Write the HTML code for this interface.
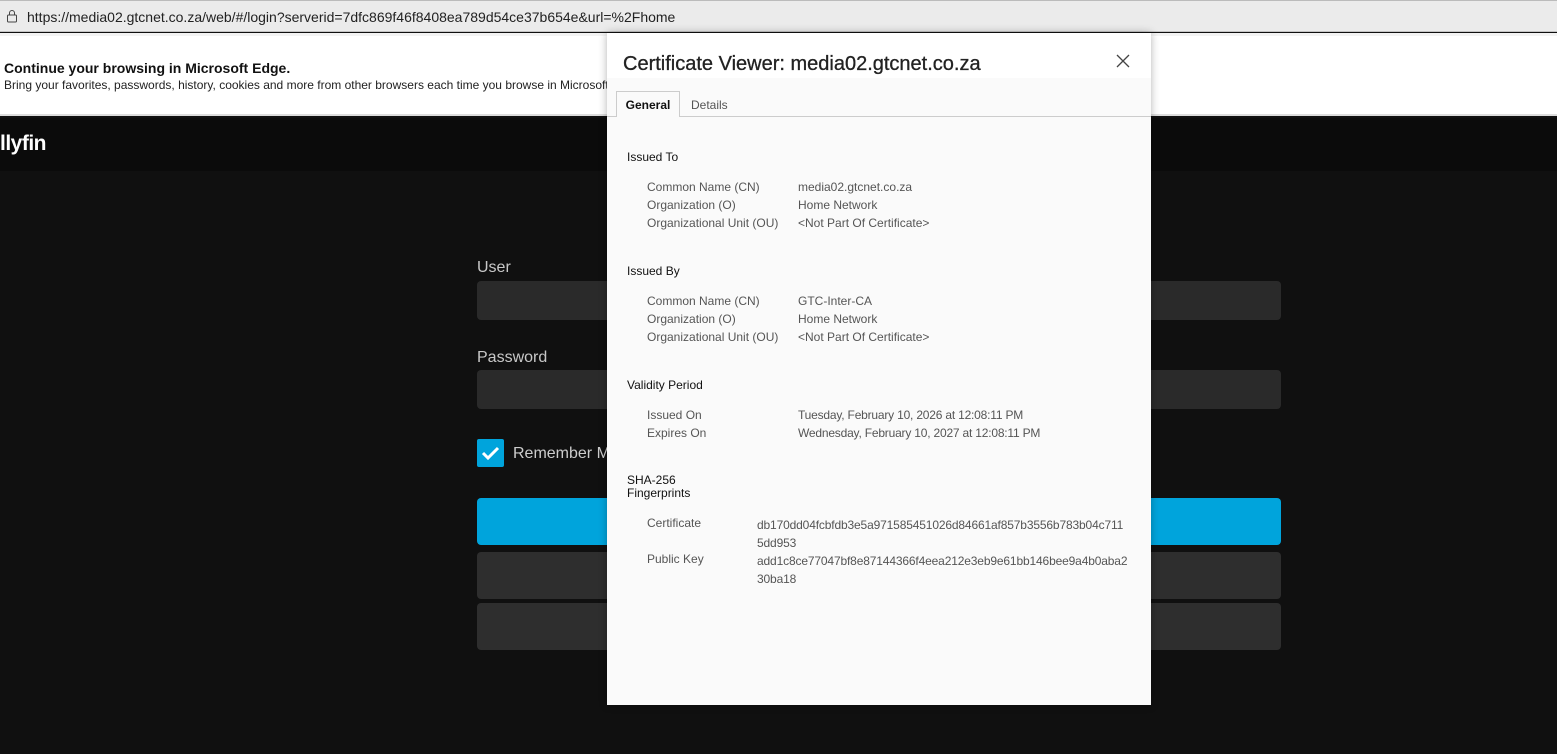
<!DOCTYPE html>
<html><head><style>
*{margin:0;padding:0;box-sizing:border-box}
body{width:1557px;height:754px;overflow:hidden;background:#101010;font-family:"Liberation Sans",sans-serif;position:relative}
.abs{position:absolute}
.addr{left:0;top:0;width:1557px;height:32px;background:#ebebeb;border-bottom:1px solid #c4c4c4;border-top:1px solid #bbb}
.addr span{position:absolute;left:27px;top:8px;font-size:14px;color:#222}
.banner{left:0;top:33px;width:1557px;height:83px;background:#fff;border-top:3px solid #f3f3f3;border-bottom:2px solid #ddd}
.hdr{left:0;top:118px;width:1557px;height:53px;background:#0b0b0b}
.lbl{color:#c8c8c8;font-size:16px}
.inp{left:477px;width:804px;height:39px;background:#2a2a2a;border-radius:4px}
.dlg{left:607px;top:33px;width:544px;height:672px;background:#fafafa;box-shadow:0 0 8px rgba(0,0,0,.3)}
.k{position:absolute;left:40px;font-size:12px;color:#555}
.v{position:absolute;left:191px;font-size:12px;color:#555}
.h{position:absolute;left:20px;font-size:12px;color:#111}
</style></head><body>
<div class="abs addr"><svg class="abs" style="left:6px;top:8px" width="12" height="14" viewBox="0 0 12 14"><rect x="1.5" y="6" width="9" height="7" rx="1" fill="none" stroke="#444"/><path d="M3.5 6V4a2.5 2.5 0 0 1 5 0v2" fill="none" stroke="#444"/></svg><span>https://media02.gtcnet.co.za/web/#/login?serverid=7dfc869f46f8408ea789d54ce37b654e&amp;url=%2Fhome</span></div>
<div class="abs banner">
<div class="abs" style="left:4px;top:24px;font-size:14px;font-weight:bold;color:#111">Continue your browsing in Microsoft Edge.</div>
<div class="abs" style="left:4px;top:42px;font-size:12px;color:#222;white-space:nowrap">Bring your favorites, passwords, history, cookies and more from other browsers each time you browse in Microsoft</div>
</div>
<div class="abs hdr"><div class="abs" style="left:0;top:14px;font-size:21px;color:#fff;font-weight:bold;letter-spacing:-0.5px">llyfin</div></div>
<div class="abs lbl" style="left:477px;top:259px">User</div>
<div class="abs inp" style="top:281px"></div>
<div class="abs lbl" style="left:477px;top:349px">Password</div>
<div class="abs inp" style="top:370px"></div>
<div class="abs" style="left:477px;top:439px;width:27px;height:28px;background:#00a4dc;border-radius:2px"><svg width="27" height="28"><path d="M6 14l5 5 10-10" fill="none" stroke="#fff" stroke-width="3"/></svg></div>
<div class="abs" style="left:513px;top:445px;font-size:16px;color:#ccc">Remember M</div>
<div class="abs" style="left:477px;top:498px;width:804px;height:47px;background:#00a4dc;border-radius:4px"></div>
<div class="abs" style="left:477px;top:552px;width:804px;height:47px;background:#2e2e2e;border-radius:4px"></div>
<div class="abs" style="left:477px;top:603px;width:804px;height:47px;background:#2e2e2e;border-radius:4px"></div>
<div class="abs dlg">
<div class="abs" style="left:0;top:0;width:544px;height:45px;background:#fff"></div>
<div class="abs" style="left:16px;top:20px;font-size:20px;color:#222;-webkit-text-stroke:0.3px #222">Certificate Viewer: media02.gtcnet.co.za</div>
<svg class="abs" style="left:509px;top:21px" width="14" height="14"><path d="M1 1L13 13M13 1L1 13" stroke="#444" stroke-width="1.3"/></svg>
<div class="abs" style="left:0;top:83px;width:544px;height:1px;background:#ccc"></div>
<div class="abs" style="left:9px;top:58px;width:64px;height:26px;border:1px solid #ccc;border-bottom:none;background:#fafafa;font-size:12px;font-weight:bold;color:#111;text-align:center;line-height:26px">General</div>
<div class="abs" style="left:84px;top:65px;font-size:12px;color:#555">Details</div>
<div class="h" style="top:117px">Issued To</div>
<div class="k" style="top:147px">Common Name (CN)</div><div class="v" style="top:147px">media02.gtcnet.co.za</div>
<div class="k" style="top:165px">Organization (O)</div><div class="v" style="top:165px">Home Network</div>
<div class="k" style="top:183px">Organizational Unit (OU)</div><div class="v" style="top:183px">&lt;Not Part Of Certificate&gt;</div>
<div class="h" style="top:231px">Issued By</div>
<div class="k" style="top:261px">Common Name (CN)</div><div class="v" style="top:261px">GTC-Inter-CA</div>
<div class="k" style="top:279px">Organization (O)</div><div class="v" style="top:279px">Home Network</div>
<div class="k" style="top:297px">Organizational Unit (OU)</div><div class="v" style="top:297px">&lt;Not Part Of Certificate&gt;</div>
<div class="h" style="top:345px">Validity Period</div>
<div class="k" style="top:375px">Issued On</div><div class="v" style="top:375px;letter-spacing:-0.2px">Tuesday, February 10, 2026 at 12:08:11 PM</div>
<div class="k" style="top:393px">Expires On</div><div class="v" style="top:393px;letter-spacing:-0.2px">Wednesday, February 10, 2027 at 12:08:11 PM</div>
<div class="h" style="top:441px;line-height:13px">SHA-256<br>Fingerprints</div>
<div class="k" style="top:483px">Certificate</div><div class="v" style="left:150px;top:483px;line-height:18px;letter-spacing:-0.15px">db170dd04fcbfdb3e5a971585451026d84661af857b3556b783b04c711<br>5dd953</div>
<div class="k" style="top:519px">Public Key</div><div class="v" style="left:150px;top:519px;line-height:18px;letter-spacing:-0.15px">add1c8ce77047bf8e87144366f4eea212e3eb9e61bb146bee9a4b0aba2<br>30ba18</div>
</div>
</body></html>
